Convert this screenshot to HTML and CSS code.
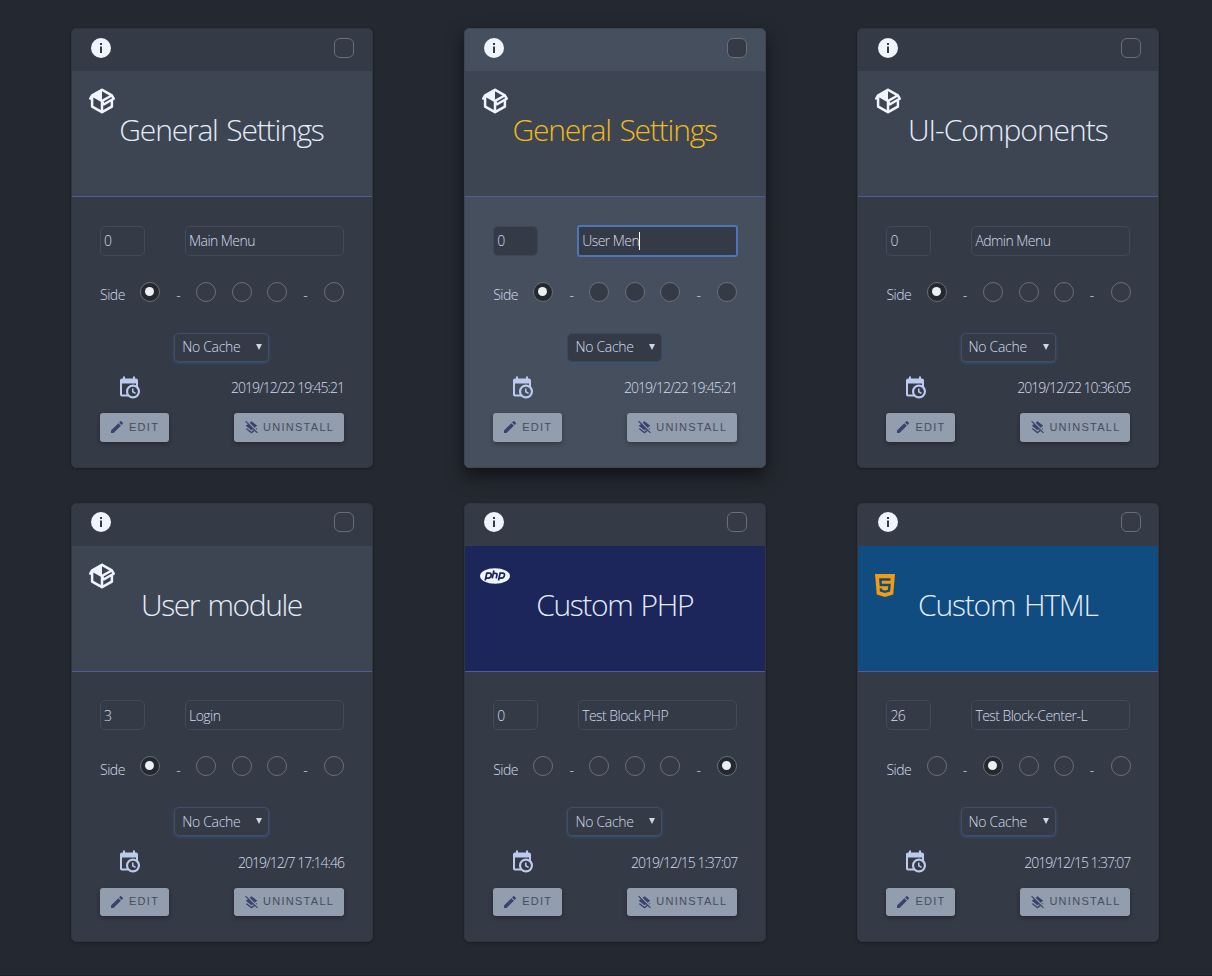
FILE: index.html
```html
<!DOCTYPE html>
<html lang="en">
<head>
<meta charset="utf-8">
<title>Blocks</title>
<link rel="stylesheet" href="styles.css">
</head>
<body>
<svg class="sprite" aria-hidden="true">
  <symbol id="info" viewBox="0 0 20 20"><circle cx="10" cy="10" r="10" fill="#f0f4ff"/><path d="M9 5h2v2H9zM9 8.600h2V15H9z" fill="#353a47"/></symbol>
  <symbol id="box" viewBox="1.500 2 21 20"><path fill="#f0f4ff" d="M2,10.96C1.5,10.68 1.35,10.07 1.63,9.59L3.13,7C3.24,6.8 3.41,6.66 3.6,6.58L11.43,2.18C11.59,2.06 11.79,2 12,2C12.21,2 12.41,2.06 12.57,2.18L20.47,6.62C20.66,6.72 20.82,6.88 20.91,7.08L22.36,9.6C22.64,10.08 22.47,10.69 22,10.96L21,11.54V16.5C21,16.88 20.79,17.21 20.47,17.38L12.57,21.82C12.41,21.94 12.21,22 12,22C11.79,22 11.59,21.94 11.43,21.82L3.53,17.38C3.21,17.21 3,16.88 3,16.5V10.96C2.7,11.13 2.32,11.14 2,10.96M12,4.15V4.15L12,10.85V10.85L17.96,7.5L12,4.15M5,15.91L11,19.29V12.58L5,9.21V15.91M19,15.91V12.69L14,15.59C13.67,15.77 13.3,15.76 13,15.6V19.29L19,15.91M13.85,13.36L20.13,9.73L19.55,8.72L13.27,12.35L13.85,13.36Z"/></symbol>
  <symbol id="php" viewBox="0 0 30 16"><ellipse cx="15" cy="8" rx="15" ry="7.800" fill="#f0f4ff"/><g fill="none" stroke="#1c265b" stroke-width="1.700"><path d="m5.200 12.500 1.600-7.300h2.600q2.200 0 1.700 2.500-.5 2.400-2.700 2.400H6M13.900 2.500l-1.700 7.900M13.200 5.400h2.500q1.600 0 1.200 1.700l-.7 3.300M18.500 12.500l1.600-7.300h2.600q2.200 0 1.700 2.500-.5 2.400-2.700 2.400h-2.400"/></g></symbol>
  <symbol id="html5" viewBox="0 0 20 23"><path d="M0 0h20l-1.800 20.500L10 23l-8.200-2.500z" fill="#f39c12"/><path d="M15.500 5.500H5.400l.4 5.500h8.700l-.5 5.600-4 1.200-4-1.200-.2-2.200" fill="none" stroke="#104c80" stroke-width="2.400"/></symbol>
  <symbol id="calendar" viewBox="3 1 20 22"><path fill="#bccbed" d="M15,13H16.5V15.82L18.94,17.23L18.19,18.53L15,16.69V13M19,8H5V19H9.67C9.24,18.09 9,17.07 9,16A7,7 0 0,1 16,9C17.07,9 18.09,9.24 19,9.67V8M5,21C3.89,21 3,20.1 3,19V5C3,3.89 3.89,3 5,3H6V1H8V3H16V1H18V3H19A2,2 0 0,1 21,5V11.1C22.24,12.36 23,14.09 23,16A7,7 0 0,1 16,23C14.09,23 12.36,22.24 11.1,21H5M16,11.15A4.85,4.85 0 0,0 11.15,16C11.15,18.68 13.32,20.85 16,20.85A4.85,4.85 0 0,0 20.85,16C20.85,13.32 18.68,11.15 16,11.15Z"/></symbol>
  <symbol id="pencil" viewBox="3 3 18 18"><path d="M3 17.250V21h3.750L17.800 9.940l-3.750-3.750zM20.700 7.040a1 1 0 0 0 0-1.410l-2.340-2.340a1 1 0 0 0-1.410 0l-1.830 1.830 3.750 3.750z" fill="#39436b"/></symbol>
  <symbol id="layersoff" viewBox="2 0 20 22"><path d="m19.810 14.990 1.190-.92-1.430-1.430-1.190.92zM19.360 10.270 21 9l-9-7-2.910 2.270 7.870 7.880zM3.270 1 2 2.270l4.220 4.220L3 9l9 7 2.100-1.630 1.420 1.430L12 18.540l-7.370-5.730L3 14.070l9 7 4.950-3.850L20.730 21 22 19.730z" fill="#39436b"/></symbol>
</svg>
<main class="cards">
  <article class="card">
    <header class="top"><svg class="info"><use href="#info"/></svg><span class="check"></span></header>
    <section class="banner"><svg class="icon box"><use href="#box"/></svg><h2 class="title t1">General Settings</h2></section>
    <div class="body">
      <div class="fields"><span class="field order">0</span><span class="field name">Main Menu</span></div>
      <div class="sides"><span class="label">Side</span><i class="radio on"></i><span>-</span><i class="radio"></i><i class="radio"></i><i class="radio"></i><span>-</span><i class="radio"></i></div>
      <div class="select"><span>No Cache</span><i class="arrow"></i></div>
      <div class="meta"><svg class="cal"><use href="#calendar"/></svg><time>2019/12/22 19:45:21</time></div>
      <div class="actions"><button class="edit"><svg class="pencil"><use href="#pencil"/></svg>EDIT</button><button class="uninstall"><svg class="layers"><use href="#layersoff"/></svg>UNINSTALL</button></div>
    </div>
  </article>
  <article class="card active">
    <header class="top"><svg class="info"><use href="#info"/></svg><span class="check"></span></header>
    <section class="banner"><svg class="icon box"><use href="#box"/></svg><h2 class="title t1">General Settings</h2></section>
    <div class="body">
      <div class="fields"><span class="field order">0</span><span class="field name focus">User Men<i class="caret"></i></span></div>
      <div class="sides"><span class="label">Side</span><i class="radio on"></i><span>-</span><i class="radio"></i><i class="radio"></i><i class="radio"></i><span>-</span><i class="radio"></i></div>
      <div class="select"><span>No Cache</span><i class="arrow"></i></div>
      <div class="meta"><svg class="cal"><use href="#calendar"/></svg><time>2019/12/22 19:45:21</time></div>
      <div class="actions"><button class="edit"><svg class="pencil"><use href="#pencil"/></svg>EDIT</button><button class="uninstall"><svg class="layers"><use href="#layersoff"/></svg>UNINSTALL</button></div>
    </div>
  </article>
  <article class="card">
    <header class="top"><svg class="info"><use href="#info"/></svg><span class="check"></span></header>
    <section class="banner"><svg class="icon box"><use href="#box"/></svg><h2 class="title t2">UI-Components</h2></section>
    <div class="body">
      <div class="fields"><span class="field order">0</span><span class="field name">Admin Menu</span></div>
      <div class="sides"><span class="label">Side</span><i class="radio on"></i><span>-</span><i class="radio"></i><i class="radio"></i><i class="radio"></i><span>-</span><i class="radio"></i></div>
      <div class="select"><span>No Cache</span><i class="arrow"></i></div>
      <div class="meta"><svg class="cal"><use href="#calendar"/></svg><time>2019/12/22 10:36:05</time></div>
      <div class="actions"><button class="edit"><svg class="pencil"><use href="#pencil"/></svg>EDIT</button><button class="uninstall"><svg class="layers"><use href="#layersoff"/></svg>UNINSTALL</button></div>
    </div>
  </article>
  <article class="card">
    <header class="top"><svg class="info"><use href="#info"/></svg><span class="check"></span></header>
    <section class="banner"><svg class="icon box"><use href="#box"/></svg><h2 class="title t3">User module</h2></section>
    <div class="body">
      <div class="fields"><span class="field order">3</span><span class="field name">Login</span></div>
      <div class="sides"><span class="label">Side</span><i class="radio on"></i><span>-</span><i class="radio"></i><i class="radio"></i><i class="radio"></i><span>-</span><i class="radio"></i></div>
      <div class="select"><span>No Cache</span><i class="arrow"></i></div>
      <div class="meta"><svg class="cal"><use href="#calendar"/></svg><time>2019/12/7 17:14:46</time></div>
      <div class="actions"><button class="edit"><svg class="pencil"><use href="#pencil"/></svg>EDIT</button><button class="uninstall"><svg class="layers"><use href="#layersoff"/></svg>UNINSTALL</button></div>
    </div>
  </article>
  <article class="card">
    <header class="top"><svg class="info"><use href="#info"/></svg><span class="check"></span></header>
    <section class="banner navy"><svg class="icon php"><use href="#php"/></svg><h2 class="title t4">Custom PHP</h2></section>
    <div class="body">
      <div class="fields"><span class="field order">0</span><span class="field name">Test Block PHP</span></div>
      <div class="sides"><span class="label">Side</span><i class="radio"></i><span>-</span><i class="radio"></i><i class="radio"></i><i class="radio"></i><span>-</span><i class="radio on"></i></div>
      <div class="select"><span>No Cache</span><i class="arrow"></i></div>
      <div class="meta"><svg class="cal"><use href="#calendar"/></svg><time>2019/12/15 1:37:07</time></div>
      <div class="actions"><button class="edit"><svg class="pencil"><use href="#pencil"/></svg>EDIT</button><button class="uninstall"><svg class="layers"><use href="#layersoff"/></svg>UNINSTALL</button></div>
    </div>
  </article>
  <article class="card">
    <header class="top"><svg class="info"><use href="#info"/></svg><span class="check"></span></header>
    <section class="banner blue"><svg class="icon html5"><use href="#html5"/></svg><h2 class="title t5">Custom HTML</h2></section>
    <div class="body">
      <div class="fields"><span class="field order">26</span><span class="field name">Test Block-Center-L</span></div>
      <div class="sides"><span class="label">Side</span><i class="radio"></i><span>-</span><i class="radio on"></i><i class="radio"></i><i class="radio"></i><span>-</span><i class="radio"></i></div>
      <div class="select"><span>No Cache</span><i class="arrow"></i></div>
      <div class="meta"><svg class="cal"><use href="#calendar"/></svg><time>2019/12/15 1:37:07</time></div>
      <div class="actions"><button class="edit"><svg class="pencil"><use href="#pencil"/></svg>EDIT</button><button class="uninstall"><svg class="layers"><use href="#layersoff"/></svg>UNINSTALL</button></div>
    </div>
  </article>
</main>
</body>
</html>
```
FILE: styles.css
```css
* { box-sizing: border-box; }
body {
  margin: 0;
  height: 976px;
  overflow: hidden;
  background: #242830;
  border-bottom: 1px solid #1c2029;
  color: #d3dcec;
  font: 300 14px/20px "Open Sans", "Noto Sans", sans-serif;
}
.sprite { display: none; }
svg { display: block; flex: none; }
.cards {
  display: grid;
  grid-template-columns: repeat(3, 302px);
  grid-auto-rows: 439.6px;
  gap: 35px 91.2px;
  padding: 28px 0 0 71px;
}
.card {
  display: flex;
  flex-direction: column;
  background: #353a47;
  border: 1px solid #30353f;
  border-radius: 5px;
  box-shadow: 0 1px 3px rgba(0, 0, 0, .3);
}
.card.active {
  background: #464f5d;
  border-color: #3c4551;
  box-shadow: 0 8px 18px rgba(0, 0, 0, .55);
}
.top {
  display: flex;
  justify-content: space-between;
  height: 42px;
  padding: 8.8px 17.800px 0 19.200px;
}
.info { width: 20px; height: 20px; }
.check {
  width: 20px;
  height: 20px;
  border: 1px solid #696e79;
  border-radius: 6px;
  background: #353a47;
}
.banner {
  height: 126px;
  padding-top: 17px;
  background: #3e4552;
  border-bottom: 1px solid #4f5b9a;
}
.navy { background: #1c265b; }
.blue { background: #104c80; }
.icon { margin-left: 17px; }
.box { width: 26px; height: 26px; }
.php { width: 30px; height: 16px; margin: 5px 0 5px 15px; }
.html5 { width: 20px; height: 23px; margin: 11px 0 -12px 17px; }
.title {
  margin: -4px 0 0;
  padding-right: 1px;
  font-size: 30px;
  font-weight: 300;
  line-height: 40px;
  text-align: center;
  white-space: nowrap;
  word-spacing: 2px;
  color: #e4ecfa;
}
.active .title { color: #f1ba18; }
.t1 { letter-spacing: -1.2px; }
.t2 { letter-spacing: -1px; }
.t3 { letter-spacing: -1.42px; }
.t4 { letter-spacing: -1.42px; }
.t5 { letter-spacing: -1.2px; }
.body { padding: 28.8px 28px 0; }
.fields { display: flex; justify-content: space-between; }
.field {
  display: flex;
  align-items: center;
  height: 30px;
  padding: 1px 3px 0;
  border: 1px solid #444b58;
  border-radius: 5px;
  background: #353a47;
  letter-spacing: -.55px;
  white-space: nowrap;
}
.order { width: 45px; }
.name { width: 159px; }
.focus { border-color: #4d75b8; border-radius: 2px; box-shadow: 0 0 0 1px #4d75b8; }
.caret { width: 1px; height: 18px; background: #fff; }
.sides {
  display: grid;
  grid-template-columns: 40.300px 36px 20px 36px 35px 36px 21px 19.700px;
  align-items: start;
  height: 26px;
  margin-top: 26px;
}
.sides > span { padding-top: 3.4px; letter-spacing: -.5px; }
.radio {
  display: grid;
  place-items: center;
  width: 20px;
  height: 20px;
  padding: 0 1px 1px 0;
  border: 1px solid #6b6f79;
  border-radius: 50%;
  background: #353a47;
}
.radio.on { background: #24282f; }
.radio.on::after { content: ""; width: 9px; height: 9px; border-radius: 50%; background: #ebeef2; }
.select {
  display: flex;
  align-items: center;
  justify-content: space-between;
  width: 95px;
  height: 29px;
  margin: 25px 0 0 74.200px;
  padding: 0 6px 0 7px;
  border: 1px solid #444e60;
  border-radius: 5px;
  background: #353a47;
  box-shadow: 0 1px 3px #355784;
  letter-spacing: -.3px;
}
.active .field:not(.focus), .active .select { border-color: #3f4654; }
.arrow { margin-bottom: 1px; border: 3px solid transparent; border-top: 6px solid #ccd6e8; border-bottom: 0; }
.meta {
  display: flex;
  justify-content: space-between;
  height: 23px;
  margin-top: 14px;
  padding-left: 20px;
}
.meta time { padding-top: 2.4px; letter-spacing: -.98px; }
.cal { width: 20px; height: 23px; }
.actions { display: flex; justify-content: space-between; margin-top: 14.2px; }
.actions button {
  display: flex;
  align-items: center;
  height: 28.600px;
  padding: 0 0 1px 11px;
  border: 0;
  border-radius: 3px;
  background: #929dae;
  box-shadow: 0 2px 5px rgba(0, 0, 0, .3);
  color: #454d60;
  font: 400 11px/20px "Liberation Sans", sans-serif;
  letter-spacing: 1.28px;
}
.edit { width: 69px; }
.uninstall { width: 110px; }
.pencil { width: 12px; height: 12px; margin: 1px 6px 0 0; }
.layers { width: 13px; height: 14px; margin: 1px 5px 0 0; }
```
